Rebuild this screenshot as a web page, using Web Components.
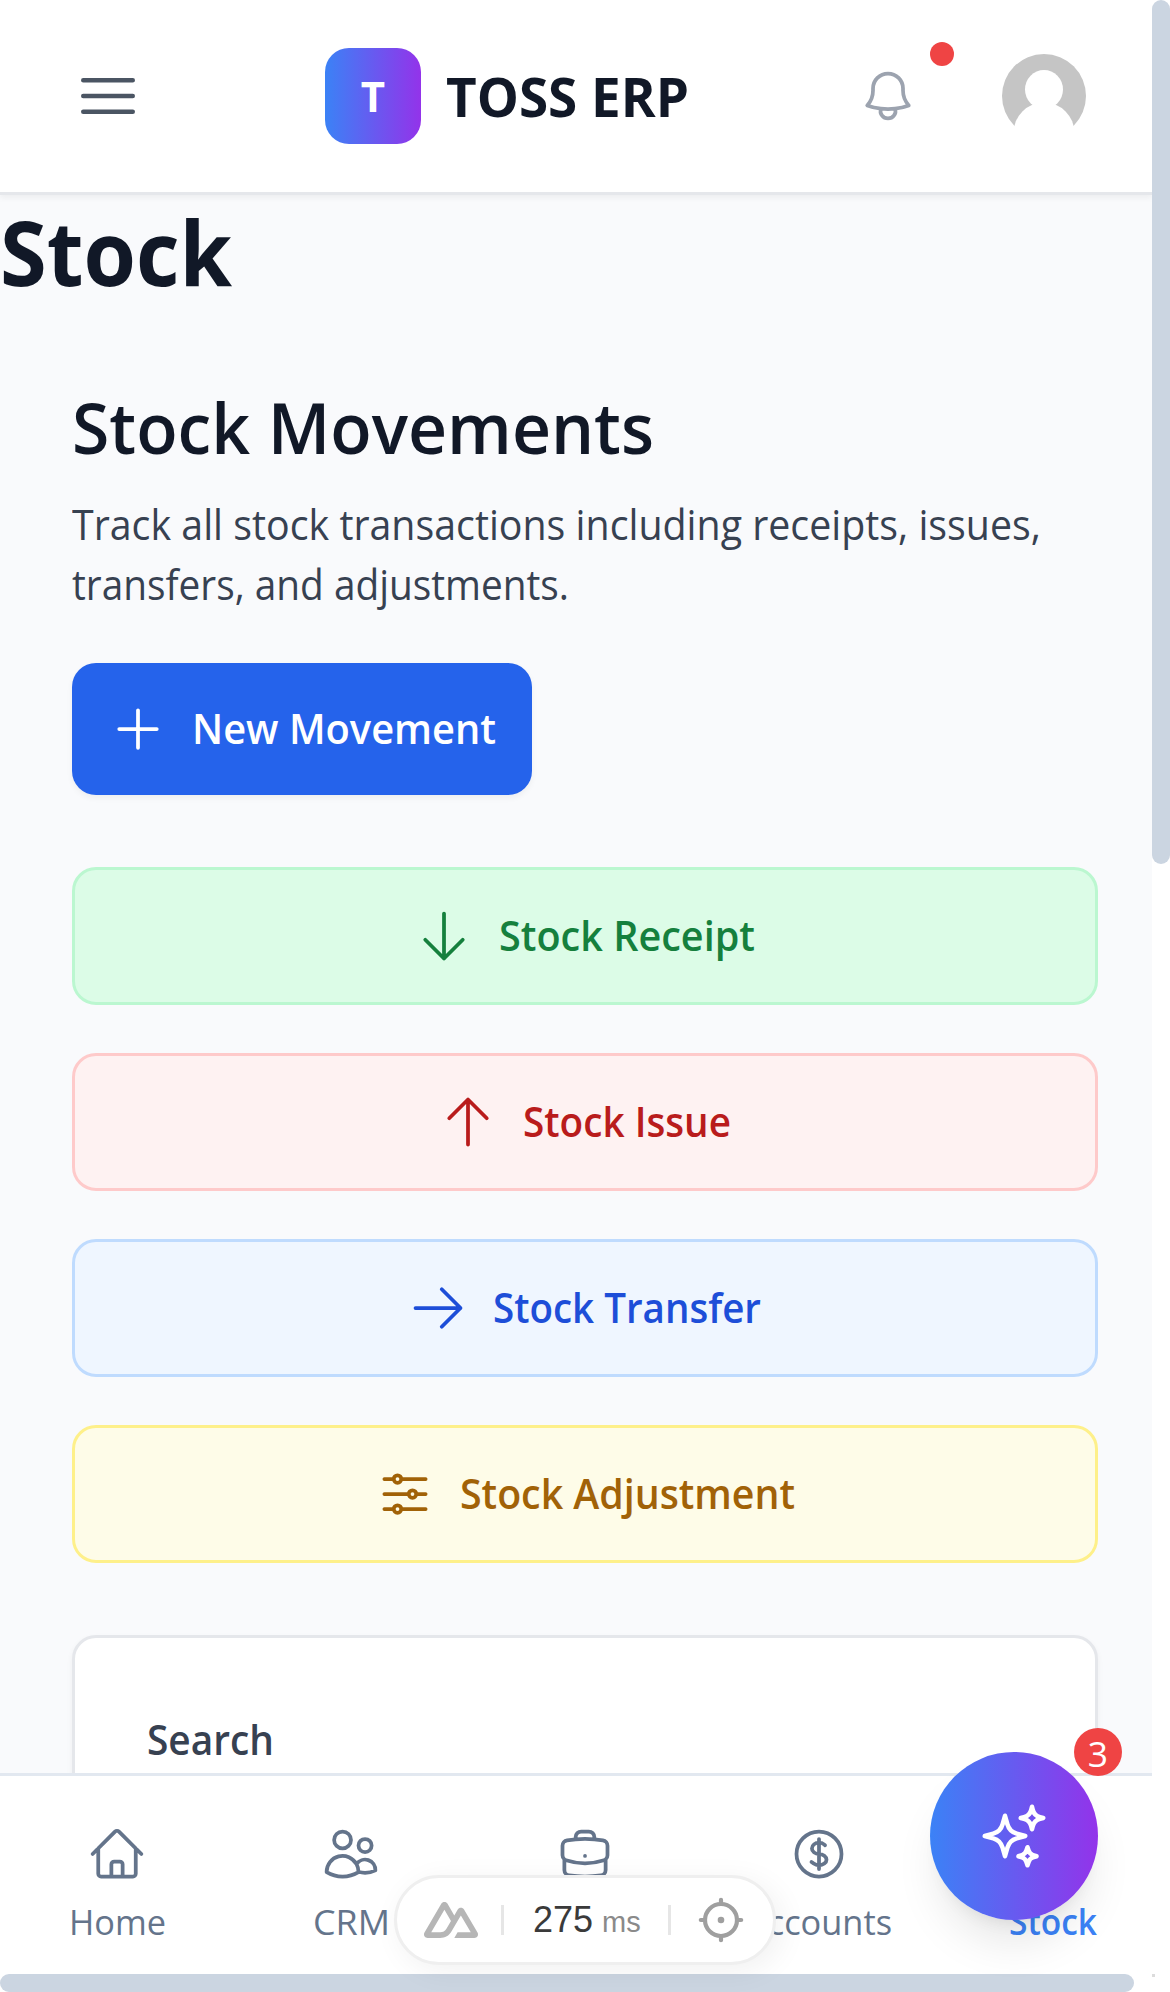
<!DOCTYPE html>
<html lang="en">
<head>
<meta charset="utf-8">
<title>TOSS ERP</title>
<style>
html,body{margin:0;height:100%;overflow:hidden}
body{font-family:"Open Sans","Noto Sans",sans-serif;background:#fff;color:#111827}
</style>
</head>
<body>
<erp-app></erp-app>
<script>
const define = (name, html, setup) => customElements.define(name, class extends HTMLElement {
  connectedCallback() {
    if (this.shadowRoot) return;
    const t = document.createElement('template');
    t.innerHTML = html;
    this.attachShadow({mode: 'open'}).append(t.content.cloneNode(true));
    if (setup) setup(this, this.shadowRoot);
  }
});

const ICONS = {
  menu: 'M3.75 6.75h16.5M3.75 12h16.5m-16.5 5.25h16.5',
  bell: 'M14.857 17.082a23.848 23.848 0 005.454-1.31A8.967 8.967 0 0118 9.75V9A6 6 0 006 9v.75a8.967 8.967 0 01-2.312 6.022c1.733.64 3.56 1.085 5.455 1.31m5.714 0a24.255 24.255 0 01-5.714 0m5.714 0a3 3 0 11-5.714 0',
  plus: 'M12 4.5v15m7.5-7.5h-15',
  down: 'M19.5 13.5L12 21m0 0l-7.5-7.5M12 21V3',
  up: 'M4.5 10.5L12 3m0 0l7.5 7.5M12 3v18',
  right: 'M13.5 4.5L21 12m0 0l-7.5 7.5M21 12H3',
  adjust: 'M10.5 6h9.75M10.5 6a1.5 1.5 0 11-3 0m3 0a1.5 1.5 0 10-3 0M3.75 6H7.5m3 12h9.75m-9.75 0a1.5 1.5 0 01-3 0m3 0a1.5 1.5 0 00-3 0m-3.75 0H7.5m9-6h3.75m-3.75 0a1.5 1.5 0 01-3 0m3 0a1.5 1.5 0 00-3 0m-9.75 0h9.75',
  home: 'M2.25 12l8.954-8.955c.44-.439 1.152-.439 1.591 0L21.75 12M4.5 9.75v10.125c0 .621.504 1.125 1.125 1.125H9.75v-4.875c0-.621.504-1.125 1.125-1.125h2.25c.621 0 1.125.504 1.125 1.125V21h4.125c.621 0 1.125-.504 1.125-1.125V9.75M8.25 21h8.25',
  users: 'M15 19.128a9.38 9.38 0 002.625.372 9.337 9.337 0 004.121-.952 4.125 4.125 0 00-7.533-2.493M15 19.128v-.003c0-1.113-.285-2.16-.786-3.07M15 19.128v.106A12.318 12.318 0 018.624 21c-2.331 0-4.512-.645-6.374-1.766l-.001-.109a6.375 6.375 0 0111.964-3.07M12 6.375a3.375 3.375 0 11-6.75 0 3.375 3.375 0 016.75 0zm8.25 2.25a2.625 2.625 0 11-5.25 0 2.625 2.625 0 015.25 0z',
  briefcase: 'M20.25 14.15v4.25c0 1.094-.787 2.036-1.872 2.18-2.087.277-4.216.42-6.378.42s-4.291-.143-6.378-.42c-1.085-.144-1.872-1.086-1.872-2.18v-4.25m16.5 0a2.18 2.18 0 00.75-1.661V8.706c0-1.081-.768-2.015-1.837-2.175a48.114 48.114 0 00-3.413-.387m4.5 8.006c-.194.165-.42.295-.673.38A23.978 23.978 0 0112 15.75c-2.648 0-5.195-.429-7.577-1.22a2.016 2.016 0 01-.673-.38m0 0A2.18 2.18 0 013 12.489V8.706c0-1.081.768-2.015 1.837-2.175a48.111 48.111 0 013.413-.387m7.5 0V5.25A2.25 2.25 0 0013.5 3h-3a2.25 2.25 0 00-2.25 2.25v.894m7.5 0a48.667 48.667 0 00-7.5 0M12 12.75h.008v.008H12v-.008z',
  dollar: 'M12 6v12m-3-2.818l.879.659c1.171.879 3.07.879 4.242 0 1.172-.879 1.172-2.303 0-3.182C13.536 12.219 12.768 12 12 12c-.725 0-1.45-.22-2.003-.659-1.106-.879-1.106-2.303 0-3.182s2.9-.879 4.006 0l.415.33M21 12a9 9 0 11-18 0 9 9 0 0118 0z',
  sparkles: 'M9.813 15.904L9 18.75l-.813-2.846a4.5 4.5 0 00-3.09-3.09L2.25 12l2.846-.813a4.5 4.5 0 003.09-3.09L9 5.25l.813 2.846a4.5 4.5 0 003.09 3.09L15.75 12l-2.846.813a4.5 4.5 0 00-3.09 3.09zM18.259 8.715L18 9.75l-.259-1.035a3.375 3.375 0 00-2.455-2.456L14.25 6l1.036-.259a3.375 3.375 0 002.455-2.456L18 2.25l.259 1.035a3.375 3.375 0 002.456 2.456L21.75 6l-1.035.259a3.375 3.375 0 00-2.456 2.456zM16.894 20.567L16.5 21.75l-.394-1.183a2.25 2.25 0 00-1.423-1.423L13.5 18.75l1.183-.394a2.25 2.25 0 001.423-1.423l.394-1.183.394 1.183a2.25 2.25 0 001.423 1.423l1.183.394-1.183.394a2.25 2.25 0 00-1.423 1.423z'
};

define('erp-icon', `<style>
:host{display:block;flex:none;width:var(--size,60px);height:var(--size,60px)}
svg{display:block;width:100%;height:100%;fill:none;stroke:currentColor;stroke-width:1.5;stroke-linecap:round;stroke-linejoin:round}
</style><svg viewBox="0 0 24 24" aria-hidden="true"><path/></svg>`,
(el, root) => root.querySelector('path').setAttribute('d', ICONS[el.getAttribute('name')]));

/* One line of text, condensed so that it takes the advance width given in px. */
define('fit-line', `<style>:host{display:block;white-space:nowrap}span{display:inline-block;transform-origin:0 50%}</style><span><slot></slot></span>`,
(el, root) => {
  const span = root.querySelector('span');
  const target = +el.getAttribute('advance');
  el.style.width = target + 'px';
  const natural = span.getBoundingClientRect().width;
  span.style.transform = `scaleX(${target / natural})`;
});

define('app-header', `<style>
:host{display:flex;align-items:center;box-sizing:border-box;height:195px;flex:none;padding:0 66px 0 72px;background:#fff;border-bottom:3px solid #e5e7eb;box-shadow:0 3px 6px rgba(0,0,0,.05);position:relative}
.menu{--size:72px;color:#4b5563}
.brand{display:flex;align-items:center;gap:25px;margin-left:181px}
.logo{width:96px;height:96px;border-radius:24px;background:linear-gradient(to right,#3b82f6,#9333ea);color:#fff;display:flex;align-items:center;justify-content:center;font:700 42px/60px "Open Sans",sans-serif}
.name{font-size:53px;font-weight:700;line-height:72px;padding-top:2px}
.side{display:flex;align-items:center;gap:84px;margin-left:auto}
.bell{position:relative;color:#9ca3af}
.dot{position:absolute;left:72px;top:-24px;width:24px;height:24px;border-radius:50%;background:#ef4444}
.avatar{display:block;width:84px;height:84px}
</style>
<erp-icon class="menu" name="menu"></erp-icon>
<div class="brand"><div class="logo">T</div><fit-line class="name" advance="243">TOSS ERP</fit-line></div>
<div class="side">
<div class="bell"><erp-icon name="bell"></erp-icon><i class="dot"></i></div>
<svg class="avatar" viewBox="0 0 84 84"><circle cx="42" cy="42" r="42" fill="#c5c5c5"/><ellipse cx="42" cy="35.5" rx="19" ry="19.5" fill="#fff"/><path d="M32 49h20v10H32z" fill="#fff"/><circle cx="42" cy="79" r="30.5" fill="#fff"/></svg>
</div>`);

define('action-card', `<style>
:host{display:flex;align-items:center;justify-content:center;gap:24px;box-sizing:border-box;height:138px;border:3px solid var(--line);border-radius:24px;background:var(--fill);color:var(--ink);font-size:41.5px;font-weight:600;line-height:60px}
:host([tone=green]){--fill:#dcfce7;--line:#bbf7d0;--ink:#15803d}
:host([tone=red]){--fill:#fef2f2;--line:#fecaca;--ink:#b91c1c}
:host([tone=blue]){--fill:#eff6ff;--line:#bfdbfe;--ink:#1d4ed8}
:host([tone=yellow]){--fill:#fefce8;--line:#fef08a;--ink:#a16207}
::slotted(fit-line){padding:0 1px 2px}
</style><slot></slot>`);

define('primary-button', `<style>
:host{display:flex;align-items:center;gap:24px;box-sizing:border-box;width:460px;height:132px;padding:0 36px;border-radius:24px;background:#2563eb;color:#fff;font-size:41.5px;font-weight:600;line-height:60px;box-shadow:0 3px 6px rgba(0,0,0,.05)}
::slotted(fit-line){padding-bottom:2px}
</style><slot></slot>`);

define('search-card', `<style>
:host{display:block;box-sizing:border-box;height:400px;padding:71px 72px;border:3px solid #e5e7eb;border-radius:24px;background:#fff;box-shadow:0 3px 6px rgba(0,0,0,.05);color:#374151;font-size:41.5px;font-weight:600;line-height:60px}
</style><fit-line advance="127">Search</fit-line>`);

define('stock-page', `<style>
:host{display:block;flex:1;min-height:0;background:#f9fafc}
h1{margin:0;font-size:89px;font-weight:700;line-height:108px;padding-top:3px}
main{padding:73px 54px 0 72px}
h2{margin:0;font-size:70.5px;font-weight:600;line-height:96px}
.lead{margin:19px 0 0;color:#374151;font-size:41.5px;line-height:60px}
primary-button{margin-top:49px}
.actions{display:flex;flex-direction:column;gap:48px;margin:72px 0}
</style>
<h1><fit-line advance="232">Stock</fit-line></h1>
<main>
<h2><fit-line advance="582">Stock Movements</fit-line></h2>
<div class="lead"><fit-line advance="969">Track all stock transactions including receipts, issues,</fit-line><fit-line advance="497">transfers, and adjustments.</fit-line></div>
<primary-button><erp-icon name="plus"></erp-icon><fit-line advance="304">New Movement</fit-line></primary-button>
<div class="actions">
<action-card tone="green"><erp-icon name="down"></erp-icon><fit-line advance="256">Stock Receipt</fit-line></action-card>
<action-card tone="red"><erp-icon name="up"></erp-icon><fit-line advance="208">Stock Issue</fit-line></action-card>
<action-card tone="blue"><erp-icon name="right"></erp-icon><fit-line advance="268">Stock Transfer</fit-line></action-card>
<action-card tone="yellow"><erp-icon name="adjust"></erp-icon><fit-line advance="335">Stock Adjustment</fit-line></action-card>
</div>
<search-card></search-card>
</main>`);

define('nav-item', `<style>
:host{display:flex;flex-direction:column;align-items:center;gap:13px;width:234px;color:#64748b;font-size:35.5px;line-height:48px}
:host([active]){color:#3b82f6;font-weight:600}
</style><slot></slot>`);

define('bottom-nav', `<style>
:host{display:flex;flex:none;position:relative;box-sizing:border-box;width:1170px;height:201px;padding-top:48px;border-top:3px solid #e2e8f0;background:#fff}
</style>
<nav-item><erp-icon name="home"></erp-icon><fit-line advance="97">Home</fit-line></nav-item>
<nav-item><erp-icon name="users"></erp-icon><fit-line advance="77">CRM</fit-line></nav-item>
<nav-item><erp-icon name="briefcase"></erp-icon></nav-item>
<nav-item><erp-icon name="dollar"></erp-icon><fit-line advance="146">Accounts</fit-line></nav-item>
<nav-item active style="padding-top:73px;gap:0"><fit-line advance="88">Stock</fit-line></nav-item>`);

define('dev-pill', `<style>
:host{position:absolute;left:394px;top:1875px;box-sizing:border-box;width:382px;height:90px;border:3px solid #efefef;border-radius:45px;background:#fff;box-shadow:6px 6px 30px rgba(0,0,0,.06);display:flex;align-items:center;padding-left:27px;font-family:"Liberation Sans",Arial,sans-serif}
svg{display:block;flex:none}
.bar{width:3px;height:30px;background:#e6e6e6}
.time{display:flex;align-items:baseline;gap:9px;margin:0 26px 0 29px;padding-top:2px;width:109px;color:#3a3a3a;font-size:36px;line-height:42px}
small{font-size:29px;color:#8a8a8a}
</style>
<svg width="54" height="36" viewBox="0 54 324 216" fill="#b6b6b6"><path d="M181.767 270H302.211C306.037 270 309.795 269.003 313.108 267.107C316.421 265.211 319.172 262.484 321.084 259.2C322.996 255.915 324.002 252.19 324 248.399C323.998 244.607 322.989 240.883 321.075 237.601L240.187 98.744C238.275 95.461 235.525 92.734 232.213 90.839C228.901 88.943 225.143 87.945 221.318 87.945C217.494 87.945 213.736 88.943 210.424 90.839C207.112 92.734 204.361 95.461 202.449 98.744L181.767 134.272L141.329 64.798C139.416 61.515 136.664 58.788 133.351 56.893C130.038 54.998 126.28 54 122.454 54C118.629 54 114.871 54.998 111.558 56.893C108.245 58.788 105.493 61.515 103.58 64.798L2.926 237.601C1.011 240.883 .002 244.607 0 248.399C-.002 252.19 1.004 255.915 2.916 259.2C4.828 262.484 7.579 265.211 10.892 267.107C14.205 269.003 17.963 270 21.789 270H97.394C127.349 270 149.441 256.959 164.641 231.517L201.546 168.172L221.313 134.272L280.637 236.1H201.546L181.767 270ZM96.161 236.065L43.398 236.054L122.49 100.291L161.953 168.172L135.531 213.543C125.436 230.051 113.968 236.065 96.161 236.065Z"/></svg>
<i class="bar" style="margin-left:23px"></i>
<div class="time"><span>275</span><small>ms</small></div>
<i class="bar"></i>
<svg style="margin-left:26px" width="48" height="48" viewBox="0 0 48 48" fill="none" stroke="#9f9f9f" stroke-width="4.2" stroke-linecap="round"><circle cx="24" cy="24" r="16"/><path d="M24 3.8V8M24 40v4.2M3.8 24H8M40 24h4.2"/><circle cx="24" cy="24" r="3.3" fill="#9f9f9f" stroke="none"/></svg>`);

define('assist-button', `<style>
:host{position:absolute;left:930px;top:1752px;width:168px;height:168px;border-radius:50%;background:linear-gradient(to right,#3b82f6,#9333ea);color:#fff;display:flex;align-items:center;justify-content:center;box-shadow:0 30px 45px -9px rgba(0,0,0,.1),0 12px 18px -12px rgba(0,0,0,.1)}
erp-icon{--size:72px}
.badge{position:absolute;right:-24px;top:-24px;width:48px;height:48px;border-radius:50%;background:#ef4444;font-size:35.5px;line-height:50px;text-align:center}
</style><erp-icon name="sparkles"></erp-icon><span class="badge">3</span>`);

define('scroll-thumb', `<style>
:host{display:block;background:#fff}
i{display:block;width:100%;height:864px;border-radius:9px;background:#cbd5e1}
:host([horizontal]) i{width:1134px;height:18px}
</style><i></i>`);

define('erp-app', `<style>
:host{display:grid;grid-template:1974px 18px/1152px 18px;width:1170px;height:1992px;position:relative;overflow:hidden}
.view{display:flex;flex-direction:column;overflow:hidden;min-width:0}
.corner{width:3px;height:3px;background:#dcdcdc}
</style>
<div class="view"><app-header></app-header><stock-page></stock-page><bottom-nav></bottom-nav></div>
<scroll-thumb></scroll-thumb>
<dev-pill></dev-pill>
<assist-button></assist-button>
<scroll-thumb horizontal></scroll-thumb>
<i class="corner"></i>`);
</script>
</body>
</html>
